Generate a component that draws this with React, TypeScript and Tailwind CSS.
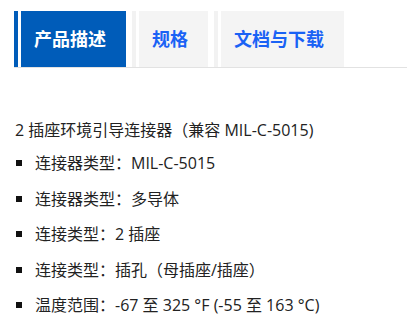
import React from "react";

const items = [
  "连接器类型：MIL-C-5015",
  "连接器类型：多导体",
  "连接类型：2 插座",
  "连接类型：插孔（母插座/插座）",
  "温度范围：-67 至 325 °F (-55 至 163 °C)",
];

function Tab({ label, active }: { label: string; active?: boolean }) {
  return (
    <div className={"flex h-[56px] border-l-4 pl-[3px] " + (active ? "border-[#005cb9]" : "border-[#f2f2f2]")}>
      <div
        className={
          "flex h-full items-center pl-[13px] pr-[20px] text-[18px] font-bold " +
          (active ? "bg-[#005cb9] text-white" : "bg-[#f4f4f4] text-[#1a62f5]")
        }
      >
        {label}
      </div>
    </div>
  );
}

export default function App() {
  return (
    <div
      className="h-[328px] w-[407px] overflow-hidden bg-white text-[#222]"
      style={{ fontFamily: '"Open Sans", "Noto Sans CJK SC", sans-serif' }}
    >
      <div className="ml-[14px] mt-[11px] flex gap-[6px] border-b border-[#e2e2e2]">
        <Tab label="产品描述" active />
        <Tab label="规格" />
        <Tab label="文档与下载" />
      </div>
      <div className="mt-[50px] pl-[15px] text-[16px] leading-[24px]">
        <p>2 插座环境引导连接器（兼容 MIL-C-5015)</p>
        <ul className="mt-[9px] flex flex-col gap-[11.5px]">
          {items.map((t) => (
            <li key={t} className="flex items-center">
              <span className="ml-[1px] mr-[13px] h-[6px] w-[6px] bg-[#111]" />
              <span>{t}</span>
            </li>
          ))}
        </ul>
      </div>
    </div>
  );
}
